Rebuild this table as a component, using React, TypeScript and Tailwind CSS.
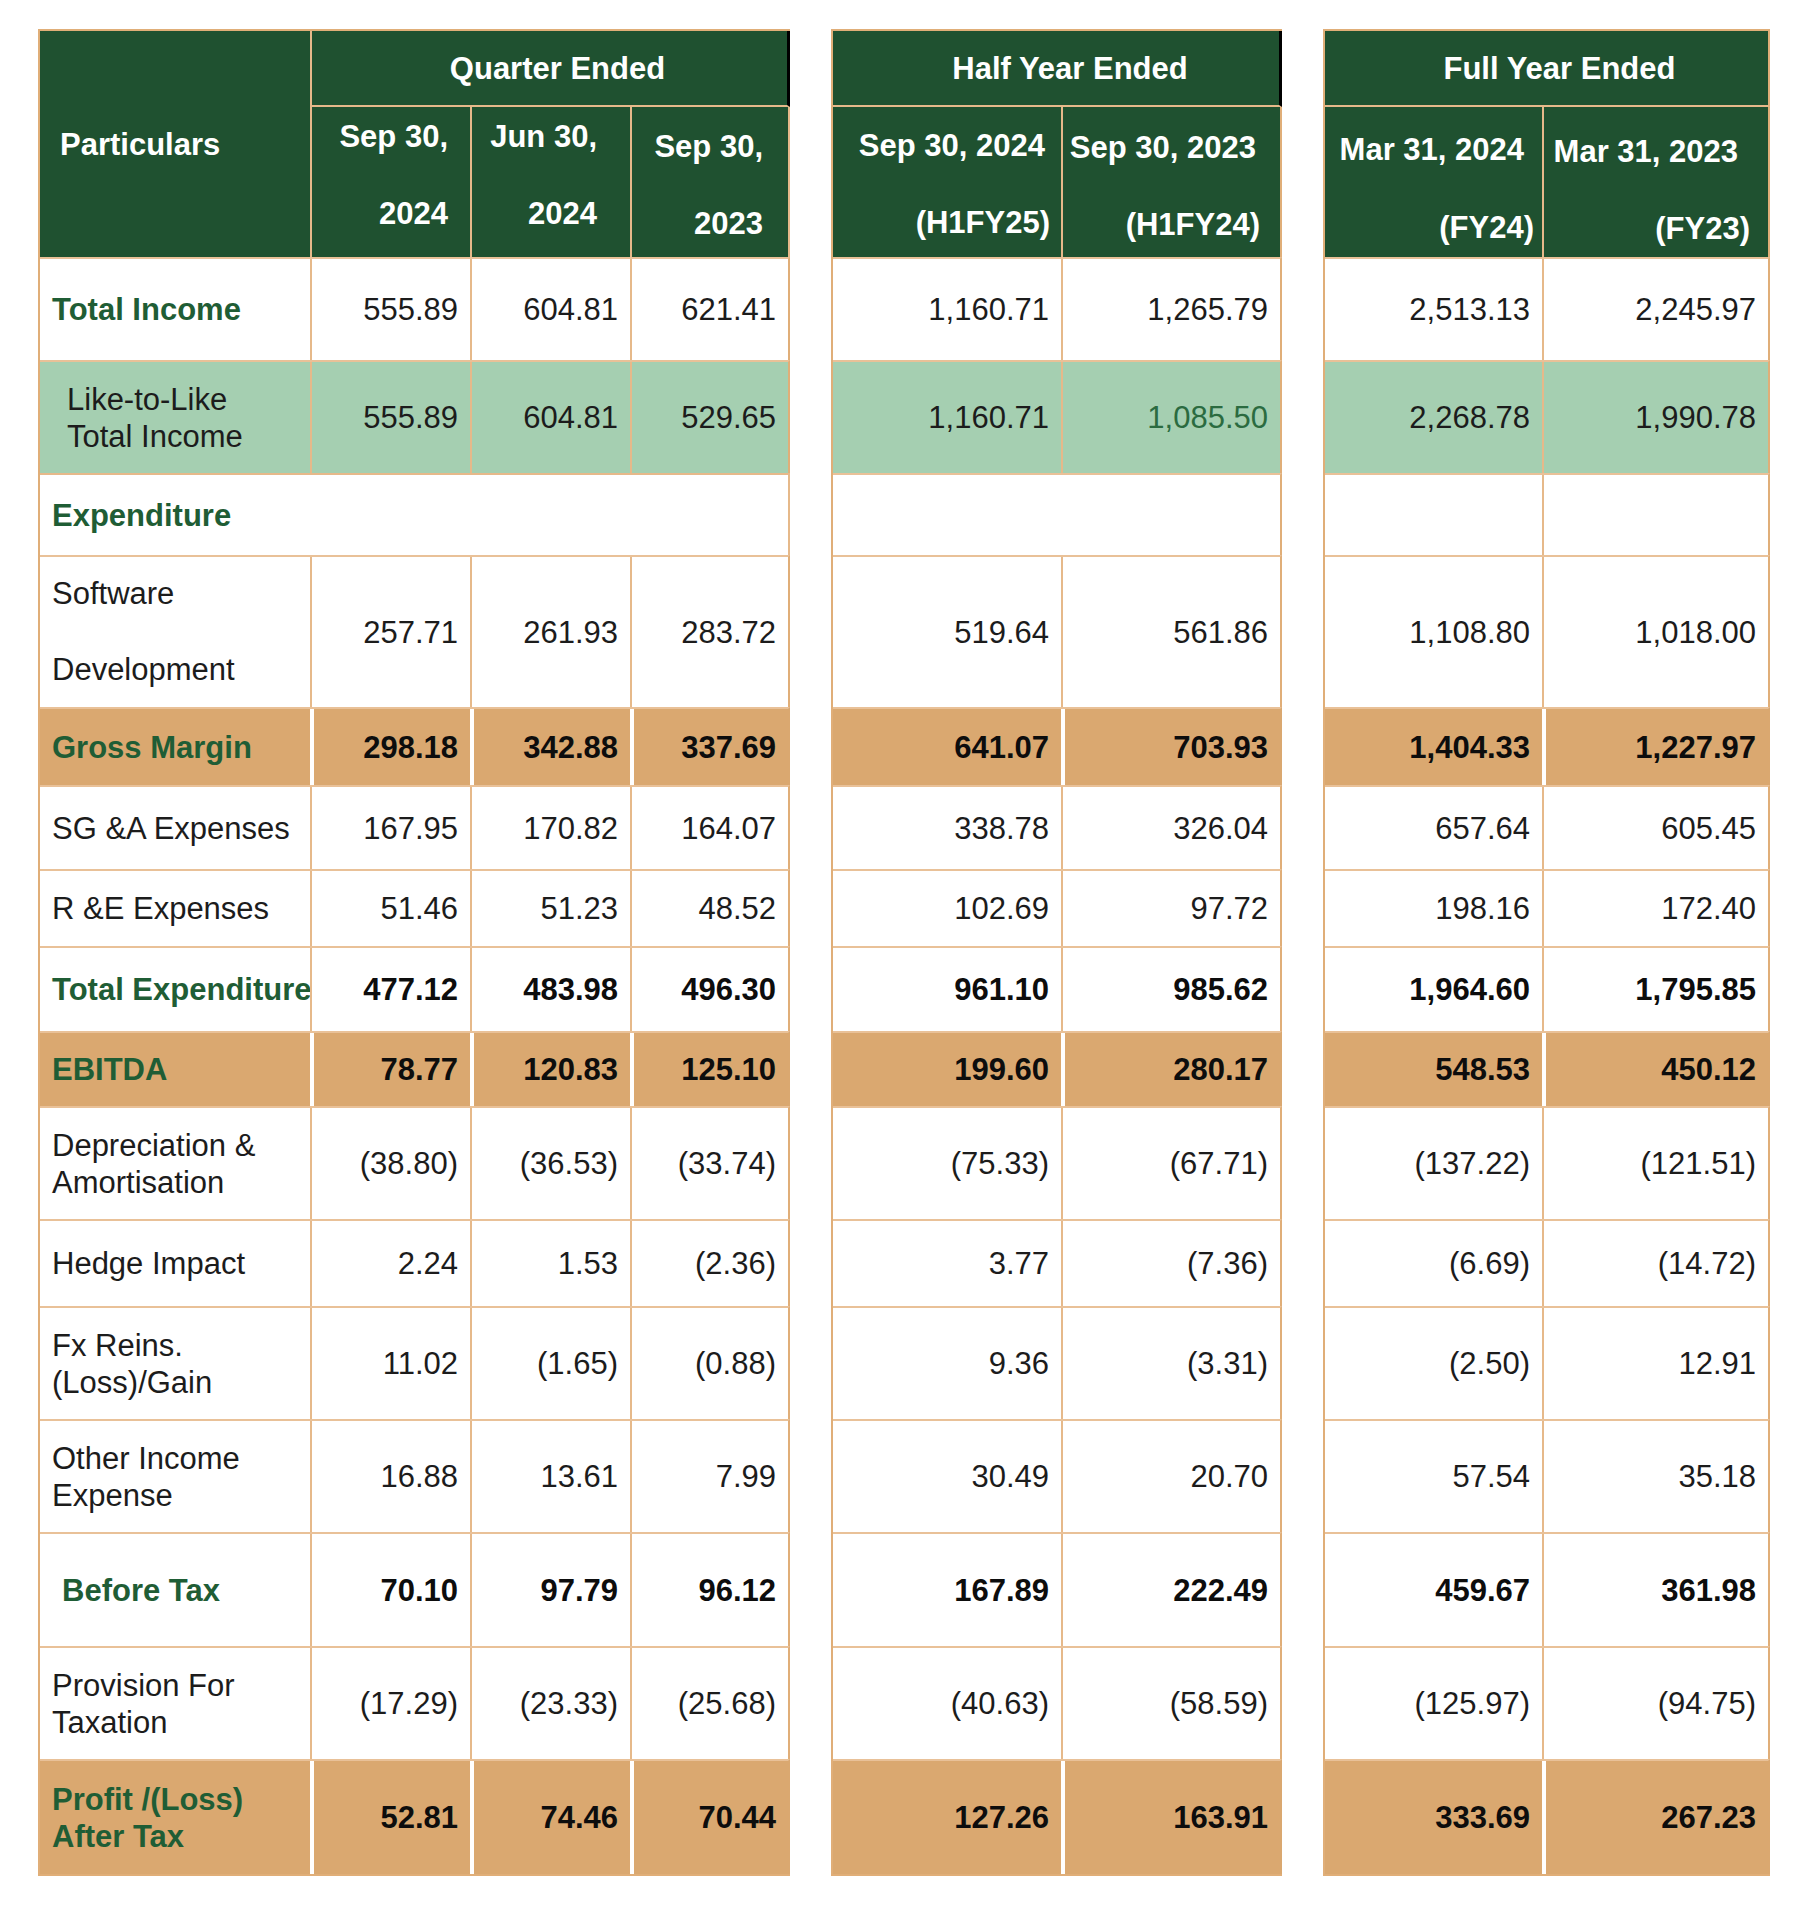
import React from "react";

type Kind = "white" | "green" | "tan" | "section";
type LabelKind = "plain" | "greenBold" | "plainIndent" | "greenIndent";

interface Row {
  label: string[];
  kind: Kind;
  labelKind: LabelKind;
  h: string;
  bold?: boolean;
  wide?: boolean;
  q: string[];
  hy: string[];
  fy: string[];
}

const rows: Row[] = [
  { label: ["Total Income"], kind: "white", labelKind: "greenBold", h: "h-[103px]", q: ["555.89", "604.81", "621.41"], hy: ["1,160.71", "1,265.79"], fy: ["2,513.13", "2,245.97"] },
  { label: ["Like-to-Like", "Total Income"], kind: "green", labelKind: "plainIndent", h: "h-[113px]", q: ["555.89", "604.81", "529.65"], hy: ["1,160.71", "1,085.50"], fy: ["2,268.78", "1,990.78"] },
  { label: ["Expenditure"], kind: "section", labelKind: "greenBold", h: "h-[82px]", q: [], hy: [], fy: [] },
  { label: ["Software", "Development"], kind: "white", labelKind: "plain", wide: true, h: "h-[152px]", q: ["257.71", "261.93", "283.72"], hy: ["519.64", "561.86"], fy: ["1,108.80", "1,018.00"] },
  { label: ["Gross Margin"], kind: "tan", labelKind: "greenBold", bold: true, h: "h-[78px]", q: ["298.18", "342.88", "337.69"], hy: ["641.07", "703.93"], fy: ["1,404.33", "1,227.97"] },
  { label: ["SG &A Expenses"], kind: "white", labelKind: "plain", h: "h-[84px]", q: ["167.95", "170.82", "164.07"], hy: ["338.78", "326.04"], fy: ["657.64", "605.45"] },
  { label: ["R &E Expenses"], kind: "white", labelKind: "plain", h: "h-[77px]", q: ["51.46", "51.23", "48.52"], hy: ["102.69", "97.72"], fy: ["198.16", "172.40"] },
  { label: ["Total Expenditure"], kind: "white", labelKind: "greenBold", bold: true, h: "h-[85px]", q: ["477.12", "483.98", "496.30"], hy: ["961.10", "985.62"], fy: ["1,964.60", "1,795.85"] },
  { label: ["EBITDA"], kind: "tan", labelKind: "greenBold", bold: true, h: "h-[75px]", q: ["78.77", "120.83", "125.10"], hy: ["199.60", "280.17"], fy: ["548.53", "450.12"] },
  { label: ["Depreciation &", "Amortisation"], kind: "white", labelKind: "plain", h: "h-[113px]", q: ["(38.80)", "(36.53)", "(33.74)"], hy: ["(75.33)", "(67.71)"], fy: ["(137.22)", "(121.51)"] },
  { label: ["Hedge Impact"], kind: "white", labelKind: "plain", h: "h-[87px]", q: ["2.24", "1.53", "(2.36)"], hy: ["3.77", "(7.36)"], fy: ["(6.69)", "(14.72)"] },
  { label: ["Fx Reins.", "(Loss)/Gain"], kind: "white", labelKind: "plain", h: "h-[113px]", q: ["11.02", "(1.65)", "(0.88)"], hy: ["9.36", "(3.31)"], fy: ["(2.50)", "12.91"] },
  { label: ["Other Income", "Expense"], kind: "white", labelKind: "plain", h: "h-[113px]", q: ["16.88", "13.61", "7.99"], hy: ["30.49", "20.70"], fy: ["57.54", "35.18"] },
  { label: ["Before Tax"], kind: "white", labelKind: "greenIndent", bold: true, h: "h-[114px]", q: ["70.10", "97.79", "96.12"], hy: ["167.89", "222.49"], fy: ["459.67", "361.98"] },
  { label: ["Provision For", "Taxation"], kind: "white", labelKind: "plain", h: "h-[113px]", q: ["(17.29)", "(23.33)", "(25.68)"], hy: ["(40.63)", "(58.59)"], fy: ["(125.97)", "(94.75)"] },
  { label: ["Profit /(Loss)", "After Tax"], kind: "tan", labelKind: "greenBold", bold: true, h: "h-[115px]", q: ["52.81", "74.46", "70.44"], hy: ["127.26", "163.91"], fy: ["333.69", "267.23"] },
];

const Q_W = ["w-[160px]", "w-[160px]", "w-[158px]"];
const H_W = ["w-[228px]", "w-[219px]"];
const F_W = ["w-[217px]", "w-[226px]"];

function rowBg(kind: Kind) {
  if (kind === "tan") return "bg-[#daa870]";
  if (kind === "green") return "bg-[#a5cfb1]";
  return "bg-white";
}

function ValCell({ v, w, kind, bold, first, greenText }: { v: string; w: string; kind: Kind; bold?: boolean; first: boolean; greenText?: boolean }) {
  const sep = first
    ? ""
    : kind === "tan"
    ? "border-l-4 border-white"
    : "border-l-2 border-[#e6b98a]";
  return (
    <div className={`${w} ${sep} ${rowBg(kind)} flex h-full shrink-0 items-center justify-end pr-[12px]`}>
      <span className={`${bold ? "font-bold text-[#0d0d0d]" : "font-normal"} ${greenText ? "text-[#2b6b40]" : bold ? "" : "text-[#1c1c1c]"}`}>{v}</span>
    </div>
  );
}

function Label({ row }: { row: Row }) {
  const color =
    row.labelKind === "greenBold" || row.labelKind === "greenIndent"
      ? "font-bold text-[#1f5d35]"
      : "font-normal text-[#1c1c1c]";
  const pad =
    row.labelKind === "plainIndent" ? "pl-[27px]" : row.labelKind === "greenIndent" ? "pl-[22px]" : "pl-[12px]";
  return (
    <div className={`flex flex-col justify-center whitespace-nowrap ${pad} ${color} ${row.wide ? "leading-[76px]" : "leading-[37px]"}`}>
      {row.label.map((l) => (
        <div key={l}>{l}</div>
      ))}
    </div>
  );
}

function HeadCell({ w, l1, l2, pt, gap, pr1, pr2, first }: { w: string; l1: string; l2: string; pt: string; gap: string; pr1: string; pr2: string; first: boolean }) {
  return (
    <div className={`${w} ${first ? "" : "border-l-2 border-[#e6b98a]"} flex h-full shrink-0 flex-col items-end ${pt} ${gap}`}>
      <div className={`${pr1} whitespace-nowrap`}>{l1}</div>
      <div className={`${pr2} whitespace-nowrap`}>{l2}</div>
    </div>
  );
}

function QuarterTable() {
  return (
    <div className="flex w-[752px] shrink-0 flex-col border-l-2 border-t-2 border-b-2 border-[#e0ae78]">
      <div className="flex h-[226px] bg-[#1f5130] font-bold text-white">
        <div className="flex w-[270px] shrink-0 items-center pl-[20px]">Particulars</div>
        <div className="flex w-[480px] shrink-0 flex-col">
          <div className="flex h-[76px] items-center justify-center border-l-2 border-r-[3px] border-b-2 border-l-[#e6b98a] border-r-black border-b-[#e6b98a] pl-[16px]">
            Quarter Ended
          </div>
          <div className="flex h-[150px] border-r-2 border-[#e6b98a] leading-[38px]">
            <HeadCell w="w-[160px]" first={false} l1="Sep 30," l2="2024" pt="pt-[11px]" gap="gap-[39px]" pr1="pr-[22px]" pr2="pr-[22px]" />
            <HeadCell w="w-[160px]" first={false} l1="Jun 30," l2="2024" pt="pt-[11px]" gap="gap-[39px]" pr1="pr-[33px]" pr2="pr-[33px]" />
            <HeadCell w="w-[158px]" first={false} l1="Sep 30," l2="2023" pt="pt-[21px]" gap="gap-[39px]" pr1="pr-[25px]" pr2="pr-[25px]" />
          </div>
        </div>
      </div>
      {rows.map((r) =>
        r.kind === "section" ? (
          <div key={r.label[0]} className={`flex ${r.h} border-t-2 border-r-2 border-[#e6b98a] bg-white`}>
            <Label row={r} />
          </div>
        ) : (
          <div key={r.label.join()} className={`flex ${r.h} border-t-2 border-r-2 border-t-[#e9c198] ${r.kind === "tan" ? "border-r-[#daa870]" : "border-r-[#e0ae78]"} ${rowBg(r.kind)}`}>
            <div className="flex h-full w-[270px] shrink-0">
              <Label row={r} />
            </div>
            {r.q.map((v, i) => (
              <ValCell key={i} v={v} w={Q_W[i]} kind={r.kind} bold={r.bold} first={false} />
            ))}
          </div>
        )
      )}
    </div>
  );
}

function SideTable({ title, titlePad, blackEdge, widths, heads, pick, splitSection }: {
  title: string;
  titlePad: string;
  blackEdge: boolean;
  widths: string[];
  heads: { l1: string; l2: string; pt: string; gap: string; pr1: string; pr2: string }[];
  pick: (r: Row) => string[];
  splitSection: boolean;
}) {
  return (
    <div className="flex shrink-0 flex-col border-l-2 border-t-2 border-b-2 border-[#e0ae78]">
      <div className="flex h-[226px] flex-col bg-[#1f5130] font-bold text-white">
        <div className={`flex h-[76px] items-center justify-center border-b-2 border-b-[#e6b98a] ${titlePad} ${blackEdge ? "border-r-[3px] border-r-black" : "border-r-2 border-r-[#e0ae78]"}`}>
          {title}
        </div>
        <div className="flex h-[150px] border-r-2 border-[#e0ae78] leading-[38px]">
          {heads.map((h, i) => (
            <HeadCell key={i} w={widths[i]} first={i === 0} {...h} />
          ))}
        </div>
      </div>
      {rows.map((r) =>
        r.kind === "section" ? (
          <div key={r.label[0]} className={`flex ${r.h} border-t-2 border-r-2 border-t-[#e9c198] border-r-[#e0ae78] bg-white`}>
            {splitSection ? (
              <>
                <div className={`${widths[0]} h-full shrink-0`} />
                <div className={`${widths[1]} h-full shrink-0 border-l-2 border-[#e6b98a]`} />
              </>
            ) : null}
          </div>
        ) : (
          <div key={r.label.join()} className={`flex ${r.h} border-t-2 border-r-2 border-t-[#e9c198] ${r.kind === "tan" ? "border-r-[#daa870]" : "border-r-[#e0ae78]"} ${rowBg(r.kind)}`}>
            {pick(r).map((v, i) => (
              <ValCell key={i} v={v} w={widths[i]} kind={r.kind} bold={r.bold} first={i === 0} greenText={v === "1,085.50"} />
            ))}
          </div>
        )
      )}
    </div>
  );
}

export default function App() {
  return (
    <div className="min-h-[1908px] w-[1800px] bg-white font-['Liberation_Sans',Arial,sans-serif] text-[31px] leading-[37px] text-[#1c1c1c]">
      <div className="flex pl-[38px] pt-[29px]">
        <QuarterTable />
        <div className="ml-[41px]">
          <SideTable
            title="Half Year Ended"
            titlePad="pl-[28px]"
            blackEdge={true}
            widths={H_W}
            splitSection={false}
            pick={(r) => r.hy}
            heads={[
              { l1: "Sep 30, 2024", l2: "(H1FY25)", pt: "pt-[20px]", gap: "gap-[39px]", pr1: "pr-[16px]", pr2: "pr-[11px]" },
              { l1: "Sep 30, 2023", l2: "(H1FY24)", pt: "pt-[22px]", gap: "gap-[39px]", pr1: "pr-[24px]", pr2: "pr-[20px]" },
            ]}
          />
        </div>
        <div className="ml-[41px]">
          <SideTable
            title="Full Year Ended"
            titlePad="pl-[26px]"
            blackEdge={false}
            widths={F_W}
            splitSection={true}
            pick={(r) => r.fy}
            heads={[
              { l1: "Mar 31, 2024", l2: "(FY24)", pt: "pt-[24px]", gap: "gap-[40px]", pr1: "pr-[18px]", pr2: "pr-[8px]" },
              { l1: "Mar 31, 2023", l2: "(FY23)", pt: "pt-[26px]", gap: "gap-[39px]", pr1: "pr-[30px]", pr2: "pr-[18px]" },
            ]}
          />
        </div>
      </div>
    </div>
  );
}
